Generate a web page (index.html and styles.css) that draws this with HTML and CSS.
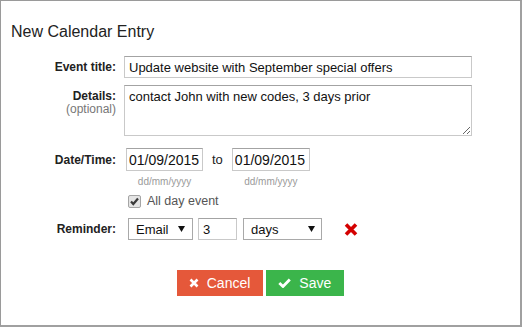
FILE: index.html
```html
<!DOCTYPE html>
<html lang="en">
<head>
<meta charset="utf-8">
<title>New Calendar Entry</title>
<link rel="stylesheet" href="styles.css">
</head>
<body>
<div class="dialog">
  <h1 class="title">New Calendar Entry</h1>
  <div class="form">
    <div class="row row-title">
      <label class="label">Event title:</label>
      <input class="text wide" type="text" value="Update website with September special offers">
    </div>
    <div class="row row-details">
      <div class="label label-top">
        <span class="label-main">Details:</span>
        <span class="note">(optional)</span>
      </div>
      <textarea class="text area">contact John with new codes, 3 days prior</textarea>
    </div>
    <div class="row row-date">
      <label class="label label-date">Date/Time:</label>
      <div class="dates">
        <div class="datefield">
          <input class="text date" type="text" value="01/09/2015">
          <span class="hint">dd/mm/yyyy</span>
        </div>
        <span class="to">to</span>
        <div class="datefield">
          <input class="text date" type="text" value="01/09/2015">
          <span class="hint">dd/mm/yyyy</span>
        </div>
      </div>
    </div>
    <div class="row row-check">
      <span class="label"></span>
      <label class="check">
        <span class="box"><svg width="11" height="11" viewBox="0 0 11 11"><path d="M2 5.5 L4.3 8 L9 2.5" fill="none" stroke="#3a3a3a" stroke-width="2.2"/></svg></span>
        <span class="check-text">All day event</span>
      </label>
    </div>
    <div class="row row-reminder">
      <label class="label">Reminder:</label>
      <div class="reminder">
        <div class="select sel-method"><span>Email</span><svg class="arrow" width="7" height="6" viewBox="0 0 7 6"><path d="M0 0 H7 L3.5 6 Z" fill="#111"/></svg></div>
        <input class="text num" type="text" value="3">
        <div class="select sel-unit"><span>days</span><svg class="arrow" width="7" height="6" viewBox="0 0 7 6"><path d="M0 0 H7 L3.5 6 Z" fill="#111"/></svg></div>
        <span class="remove"><svg width="14" height="13" viewBox="0 0 14 13"><path d="M2 1.5 L12 11.5 M12 1.5 L2 11.5" fill="none" stroke="#d40000" stroke-width="3.6"/></svg></span>
      </div>
    </div>
  </div>
  <div class="actions">
    <button class="btn btn-cancel" type="button"><svg class="icon" width="10" height="10" viewBox="0 0 10 10"><path d="M1.5 1.5 L8.5 8.5 M8.5 1.5 L1.5 8.5" fill="none" stroke="#fff" stroke-width="2.6"/></svg><span>Cancel</span></button>
    <button class="btn btn-save" type="button"><svg class="icon" width="13" height="10" viewBox="0 0 13 10"><path d="M1.3 5 L5 8.5 L11.8 1.5" fill="none" stroke="#fff" stroke-width="2.8"/></svg><span>Save</span></button>
  </div>
</div>
</body>
</html>
```
FILE: styles.css
```css
* { box-sizing: border-box; }
html, body { margin: 0; padding: 0; background: #fff; }
body { font-family: "Liberation Sans", Arial, sans-serif; color: #222; }

.dialog {
  width: 522px;
  height: 327px;
  border: 1px solid #9a9a9a;
  border-right-width: 2px;
  border-bottom-width: 2px;
  border-right-color: #a0a0a0;
  border-bottom-color: #a0a0a0;
  background: #fff;
  overflow: hidden;
}

.title {
  margin: 22px 0 0 10px;
  font-size: 16px;
  line-height: 18px;
  font-weight: normal;
  color: #222;
}

.row {
  display: grid;
  grid-template-columns: 115px 1fr;
  column-gap: 8px;
  align-items: center;
}
.label {
  text-align: right;
  font-size: 12px;
  font-weight: bold;
  color: #222;
}
.row-title { margin-top: 15px; }
.row-details { margin-top: 7px; align-items: start; }
.row-date { margin-top: 12px; align-items: start; }
.row-check { margin-top: 6px; }
.row-reminder { margin-top: 10px; }

.label-top { display: flex; flex-direction: column; padding-top: 4px; }
.label-main { line-height: 14px; }
.note { font-weight: normal; color: #777; line-height: 13px; }
.label-date { line-height: 23px; padding-top: 1px; }

.text {
  font-family: "Liberation Sans", Arial, sans-serif;
  color: #111;
  background: #fff;
  border: 1px solid #c9c9c9;
  border-top-color: #a3a3a3;
  border-radius: 0;
  margin: 0;
  outline: none;
}
.wide {
  width: 348px;
  height: 22px;
  font-size: 13px;
  padding: 0 4px;
}
.area {
  display: block;
  width: 348px;
  height: 51px;
  font-size: 13px;
  line-height: 15px;
  padding: 3px 4px;
}

.dates { display: flex; align-items: flex-start; margin-left: 2px; }
.datefield { display: flex; flex-direction: column; align-items: center; }
.date {
  width: 77px;
  height: 23px;
  font-size: 14px;
  padding: 0 2px;
}
.datefield + .to + .datefield .date { width: 78px; }
.hint {
  margin-top: 5px;
  font-size: 10px;
  line-height: 12px;
  color: #9a9a9a;
}
.to {
  font-size: 13px;
  line-height: 23px;
  margin: 0 9px 0 9px;
  color: #222;
}

.check { display: flex; align-items: center; margin-left: 4px; height: 14px; }
.box {
  width: 13px;
  height: 13px;
  border: 1px solid #a5a5a5;
  border-radius: 2px;
  background: #e4e4e4;
  display: flex;
  align-items: center;
  justify-content: center;
}
.check-text { margin-left: 6px; font-size: 12.5px; color: #555; }

.reminder { display: flex; align-items: center; margin-left: 4px; }
.select {
  height: 22px;
  border: 1px solid #a9a9a9;
  background: #fff;
  display: flex;
  align-items: center;
  justify-content: space-between;
  padding: 0 7px;
  font-size: 13px;
  color: #111;
}
.sel-method { width: 65px; }
.num {
  width: 39px;
  height: 22px;
  font-size: 13px;
  padding: 0 4px;
  margin-left: 5px;
}
.sel-unit { width: 79px; margin-left: 6px; padding-right: 6px; }
.remove { display: flex; margin-left: 22px; }

.actions {
  display: flex;
  justify-content: center;
  gap: 3px;
  margin-top: 30px;
}
.btn {
  display: flex;
  align-items: center;
  gap: 8px;
  height: 26px;
  padding: 0 13px 0 12px;
  border: none;
  border-radius: 0;
  font-family: "Liberation Sans", Arial, sans-serif;
  font-size: 14px;
  color: #fff;
}
.btn-cancel { background: #e5583a; }
.btn-save { background: #3bb54b; }
.icon { display: block; }
```
